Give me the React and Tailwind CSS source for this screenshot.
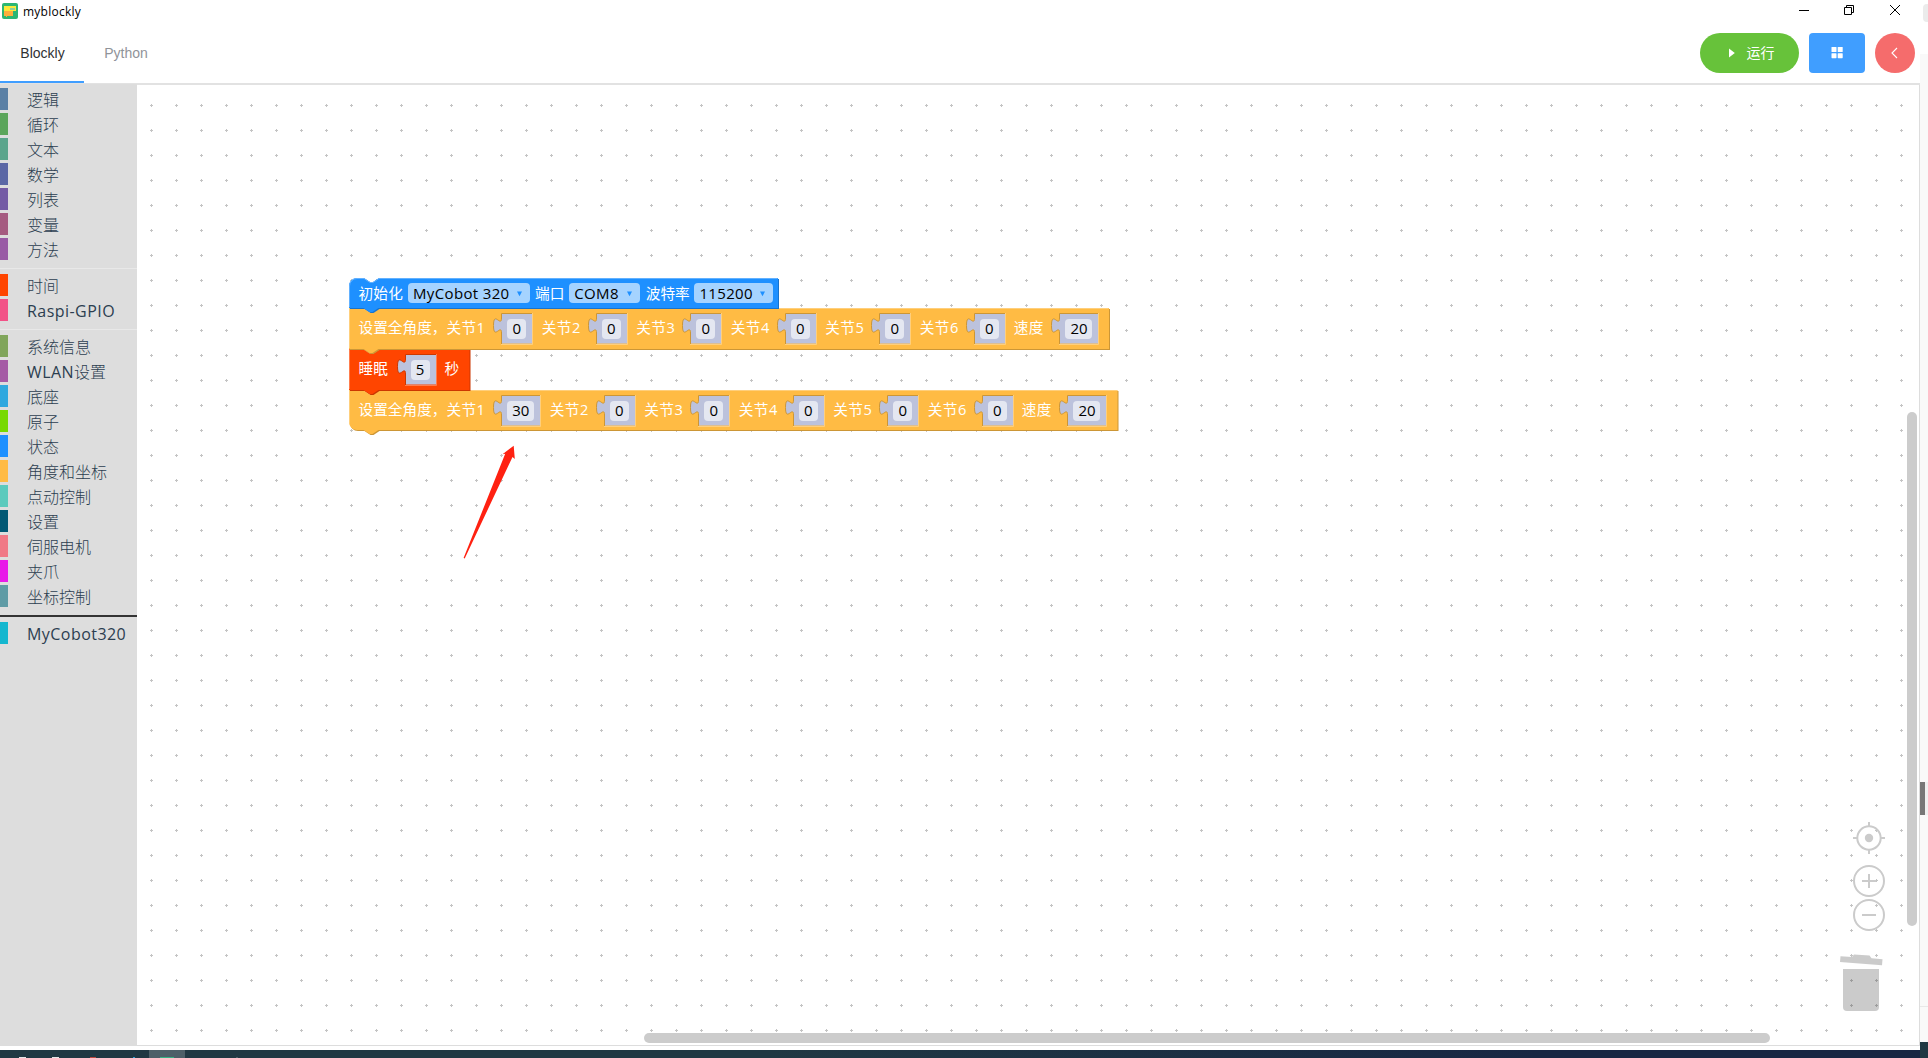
import React from "react";

const UI = "font-['Open_Sans','Noto_Sans_CJK_SC',sans-serif]";

const GROUPS = [
  [
    ["逻辑", "#5b80a5"], ["循环", "#5ba55b"], ["文本", "#5ba58c"], ["数学", "#5b67a5"],
    ["列表", "#745ba5"], ["变量", "#a55b80"], ["方法", "#995ba5"],
  ],
  [["时间", "#ff4500"], ["Raspi-GPIO", "#f25287"]],
  [
    ["系统信息", "#80a55b"], ["WLAN设置", "#a55ba5"], ["底座", "#2fa8df"], ["原子", "#77d900"],
    ["状态", "#1e90ff"], ["角度和坐标", "#ffbb44"], ["点动控制", "#5ccabd"], ["设置", "#005874"],
    ["伺服电机", "#f07986"], ["夹爪", "#e81ae8"], ["坐标控制", "#5f9ba5"],
  ],
  [["MyCobot320", "#14b7cf"]],
];

function Category({ name, color }) {
  const [, latin, rest] = name.match(/^([\x00-\x7f]*)(.*)$/);
  return (
    <div className="mb-[3px] flex h-[22px] items-center border-l-8 pt-px pl-[19px]" style={{ borderColor: color }}>
      <span className="text-base leading-[22px] font-light whitespace-nowrap text-[#2c3e50]">
        {latin && <span className="font-normal tracking-[0.45px]">{latin}</span>}
        {rest}
      </span>
    </div>
  );
}

function Sidebar() {
  return (
    <aside className={"h-[962px] w-[137px] shrink-0 bg-[#ddd] pt-1 " + UI}>
      {GROUPS.map((g, i) => (
        <div key={i}>
          {i > 0 && (
            <div className={i === 3 ? "mt-2 mb-[5px] h-0.5 bg-[#333]" : "mt-2 mb-[5px] h-px bg-[#e8e8e8]"} />
          )}
          {g.map(([n, c]) => <Category key={n} name={n} color={c} />)}
        </div>
      ))}
    </aside>
  );
}

function shape(w, h, top, bottom) {
  const start = top ? "M0,8 A8,8 0 0 1 8,0" : "M0,0";
  const end = bottom ? `H8 A8,8 0 0 1 0,${h - 8} Z` : "H0 Z";
  return `${start} H15 l6,4 3,0 6,-4 H${w} V${h} H29.5 l-6,4 -3,0 -6,-4 ${end}`;
}

function Block({ w, h, color, light, dark, top, bottom, children }) {
  const d = shape(w, h, top, bottom);
  return (
    <div className="relative flex items-start" style={{ width: w, height: h }}>
      <svg className="absolute top-0 left-0 overflow-visible" width={w} height={h}>
        <path d={d} fill={dark} transform="translate(1,1)" />
        <path d={d} fill={color} />
        <path
          d={`M0.5,${bottom ? h - 6 : h - 1} V${top ? 8 : 0.5} ${top ? "A7.5,7.5 0 0 1 8,0.5" : ""} H15 l6,4 3,0 6,-4 H${w - 0.5}`}
          fill="none" stroke={light} strokeWidth="1"
        />
      </svg>
      <div className="relative flex h-full items-start">{children}</div>
    </div>
  );
}

function Label({ w, y, ls = 0, children }) {
  return (
    <span
      className="shrink-0 text-[14.67px] leading-5 whitespace-nowrap text-white"
      style={{ width: w, marginTop: y, letterSpacing: ls }}
    >
      {children}
    </span>
  );
}

function Value({ children, dark, light }) {
  const w = children.length > 1 ? 39 : 31;
  const tab = "M0.5,0.5 V5 c0,10 -8,-8 -8,7.5 s8,-2.5 8,7.5 V30.5";
  return (
    <div className="relative mt-[5px] flex h-[31px] shrink-0 items-center justify-center" style={{ width: w }}>
      <svg className="absolute top-0 left-0 overflow-visible" width={w} height="31">
        <path d={`${tab} H${w} V0.5 Z`} fill="#bcc2dc" />
        <path d={`M${w},0.5 H0.5 V5 c0,10 -8,-8 -8,7.5 s8,-2.5 8,7.5 V31`} fill="none" stroke={dark} strokeWidth="1" />
        <path d={`M0,31.5 H${w + 0.5} V0`} fill="none" stroke={light} strokeWidth="1" />
      </svg>
      <span
        className="relative flex h-5 items-start justify-center rounded bg-[#e4e7f1] text-[15px] leading-[19px] text-black"
        style={{ width: w - 12 }}
      >
        {children}
      </span>
    </div>
  );
}

function Dropdown({ w, children }) {
  return (
    <div
      className="mt-[5px] flex h-5 shrink-0 items-center justify-between rounded bg-[#a5d3ff] pr-2 pl-[5px] text-[15px] leading-5 tracking-[0.35px] text-black"
      style={{ width: w }}
    >
      <span className="whitespace-nowrap">{children}</span>
      <svg width="5" height="6" className="mt-px"><path d="M0,0.6 H5 L2.5,5.2 Z" fill="#1e90ff" /></svg>
    </div>
  );
}

function AngleBlock({ first, bottom }) {
  const wide = first.length > 1;
  const c = { dark: "#cc9636", light: "#ffcf7c" };
  return (
    <Block w={wide ? 768.5 : 760} h={bottom ? 40 : 41} color="#ffbb44" {...c} bottom={bottom}>
      <div className="w-[9.5px] shrink-0" />
      <Label w={88} y={9}>设置全角度，</Label>
      <Label w={54.8} y={9} ls={0.4}>关节1</Label>
      <Value {...c}>{first}</Value>
      {[2, 3, 4, 5, 6].map((n) => (
        <div key={n} className="flex items-start pl-[9.5px]">
          <Label w={54} y={9} ls={0.4}>{"关节" + n}</Label>
          <Value {...c}>0</Value>
        </div>
      ))}
      <div className="w-[9px] shrink-0" />
      <Label w={45.7} y={9} ls={0.2}>速度</Label>
      <Value {...c}>20</Value>
    </Block>
  );
}

function Program() {
  const red = { dark: "#cc3700", light: "#ff7d4d" };
  return (
    <div className={"absolute top-[193px] left-[212px] flex flex-col " + UI}>
      <div className="relative z-40">
        <Block w={429} h={30} color="#1e90ff" dark="#1873cc" light="#62b1ff" top>
          <div className="w-[9.5px] shrink-0" />
          <Label w={49.5} y={5} ls={0.2}>初始化</Label>
          <Dropdown w={122}>MyCobot 320</Dropdown>
          <div className="w-[5px] shrink-0" />
          <Label w={34.3} y={5}>端口</Label>
          <Dropdown w={71}>COM8</Dropdown>
          <div className="w-[5.5px] shrink-0" />
          <Label w={48.6} y={5}>波特率</Label>
          <Dropdown w={78.5}>115200</Dropdown>
        </Block>
      </div>
      <div className="relative z-30"><AngleBlock first="0" /></div>
      <div className="relative z-20">
        <Block w={120.5} h={41} color="#ff4500" {...red}>
          <div className="w-[9.5px] shrink-0" />
          <Label w={46} y={9} ls={0.2}>睡眠</Label>
          <Value {...red}>5</Value>
          <div className="w-[9px] shrink-0" />
          <Label w={20} y={9}>秒</Label>
        </Block>
      </div>
      <div className="relative z-10"><AngleBlock first="30" bottom /></div>
    </div>
  );
}

function Grid() {
  return (
    <svg className="absolute inset-0 h-full w-full">
      <defs>
        <pattern id="dots" x="2" y="8" width="25" height="25" patternUnits="userSpaceOnUse">
          <path d="M11,12.5 H14 M12.5,11 V14" stroke="#c4c4c4" strokeWidth="1" />
        </pattern>
      </defs>
      <rect width="100%" height="100%" fill="url(#dots)" />
    </svg>
  );
}

function Controls() {
  return (
    <div className="absolute top-[737px] right-[29px] flex w-[42px] flex-col items-center">
      <svg width="32" height="32" fill="none" stroke="#cbcbcb" strokeWidth="2" className="overflow-visible">
        <circle cx="16" cy="16" r="11.7" />
        <circle cx="16" cy="16" r="4.2" fill="#cbcbcb" stroke="none" />
        <path d="M16,0 V4 M16,28 V32 M0,16 H4 M28,16 H32" />
      </svg>
      <svg width="32" height="32" fill="none" stroke="#cbcbcb" strokeWidth="2" className="mt-[11px]">
        <circle cx="16" cy="16" r="15" /><path d="M9,16 H23 M16,9 V23" />
      </svg>
      <svg width="32" height="32" fill="none" stroke="#cbcbcb" strokeWidth="2" className="mt-[2px]">
        <circle cx="16" cy="16" r="15" /><path d="M9,16 H23" />
      </svg>
      <svg width="42" height="57" fill="#000" opacity="0.2" className="mt-6 mr-[17px] overflow-visible">
        <path d="M0.5,1.2 L12,1.9 L14,-0.5 L29.5,0.5 L31.5,3.3 L42.5,4.3 L42,10.3 L0,6.9 Z" />
        <path d="M3,14 H39 V52 Q39,56 35,56 H7 Q3,56 3,52 Z" />
      </svg>
    </div>
  );
}

function Workspace() {
  return (
    <main className="relative h-[961px] w-[1783px] shrink-0 border-r border-b border-[#ddd] bg-white">
      <Grid />
      <Program />
      <svg className="absolute top-[360px] left-[326px]" width="52" height="114">
        <path d="M0.6,113 L42.2,8.7 L39.5,9.3 L50.7,0.7 L51.8,14 L49.5,12 L1.7,113.5 Z" fill="#ff2111" />
      </svg>
      <Controls />
      <div className="absolute top-[327px] right-0.5 h-[514px] w-[10px] rounded-full bg-[#ccc]" />
      <div className="absolute bottom-0.5 left-[507px] h-[10px] w-[1126px] rounded-full bg-[#ccc]" />
    </main>
  );
}

function TitleBar() {
  return (
    <div className={"flex h-[22px] items-start bg-white " + UI}>
      <svg width="16" height="16" className="mt-[3px] ml-0.5 shrink-0">
        <rect width="16" height="16" rx="2" fill="#2bb673" />
        <path d="M2,3 H14 V8 H2 Z" fill="#fbe83a" />
        <path d="M2,8 H11 V13 H5 V14 H4 V13 H2 Z" fill="#fcae3b" />
        <path d="M8,5 H13 V7 H8 Z" fill="#8ccf9f" />
      </svg>
      <span className="mt-1 ml-[5px] text-[12px] leading-4 tracking-[0.25px] text-black">myblockly</span>
      <div className="grow" />
      <svg width="102" height="12" className="mt-1 mr-[19px]" fill="none" stroke="#000" strokeWidth="1">
        <path d="M0,6.5 H10 M45.5,3.5 H52.5 V10.5 H45.5 Z M47.5,3.5 V1.5 H54.5 V8.5 H52.5 M91,1 L101,11 M101,1 L91,11" />
      </svg>
    </div>
  );
}

function Header() {
  return (
    <header className="flex h-[63px] border-b-2 border-[#e2e2e2] bg-white font-['Liberation_Sans','Noto_Sans_CJK_SC',sans-serif] text-sm">
      <div className="flex w-[84px] items-start justify-center border-b-2 border-[#409eff] pt-[11px] pl-px text-[#303133]">
        <span className="leading-10">Blockly</span>
      </div>
      <div className="flex w-[84px] items-start justify-center pt-[11px] text-[#909399]">
        <span className="leading-10">Python</span>
      </div>
      <div className="ml-auto flex gap-[10px] pt-[11px] pr-[5px]">
        <button className="flex h-10 w-[99px] items-center rounded-full bg-[#67c23a] pl-7 text-white">
          <svg width="8" height="10"><path d="M1,0.5 L6.8,5 L1,9.5 Z" fill="#fff" /></svg>
          <span className="ml-[10.5px]">运行</span>
        </button>
        <button className="flex h-10 w-14 items-center justify-center rounded bg-[#409eff]">
          <svg width="12" height="12" fill="#fff">
            <rect x="0.5" y="0" width="5" height="5" rx="0.6" /><rect x="6.7" y="0" width="5" height="5" rx="0.6" />
            <rect x="0.5" y="6.2" width="5" height="5" rx="0.6" /><rect x="6.7" y="6.2" width="5" height="5" rx="0.6" />
          </svg>
        </button>
        <button className="flex h-10 w-10 items-center justify-center rounded-full bg-[#f56c6c] pr-px">
          <svg width="8" height="12" fill="none" stroke="#fff" strokeWidth="1.1"><path d="M6,1 L1,6 L6,11" /></svg>
        </button>
      </div>
    </header>
  );
}

function RightStrip() {
  return (
    <div className="flex w-2 flex-col bg-[#f9f9f9]">
      <div className="h-[54px] bg-white pt-1 pl-[3px]"><div className="h-[18px] rounded-l-sm bg-[#ebebeb]" /></div>
      <div className="h-[728px]" />
      <div className="h-[33px] border-l-[5px] border-[#777] bg-[#efefef]" />
      <div className="h-[191px]" />
      <div className="h-px bg-[#e8e8e8]" />
      <div className="h-[35px]" />
      <div className="grow bg-[#203843]" />
    </div>
  );
}

function Taskbar() {
  return (
    <div className="flex h-2 items-end bg-linear-to-r from-[#203843] from-40% to-[#182743] to-80%">
      <div className="ml-[19px] h-px w-[7px] bg-[#e2e6e8]" />
      <div className="ml-[26px] h-px w-[7px] bg-[#e2e6e8]" />
      <div className="ml-[31px] h-px w-[6px] bg-[#b8483f]" />
      <div className="ml-[37px] h-px w-0.5 bg-[#2f9fd8]" />
      <div className="ml-[14px] flex h-2 w-9 items-end bg-[#4d5f68] pl-[11px]">
        <div className="h-px w-[14px] bg-[#35b184]" />
      </div>
      <div className="ml-[51px] h-px w-0.5 bg-[#4d5f68]" />
    </div>
  );
}

export default function App() {
  return (
    <div className="flex h-[1058px] w-[1928px] overflow-hidden bg-white">
      <div className="flex w-[1920px] flex-col">
        <TitleBar />
        <Header />
        <div className="-mt-px flex h-[966px] items-start">
          <Sidebar />
          <div className="pt-px"><Workspace /></div>
        </div>
        <Taskbar />
      </div>
      <RightStrip />
    </div>
  );
}
